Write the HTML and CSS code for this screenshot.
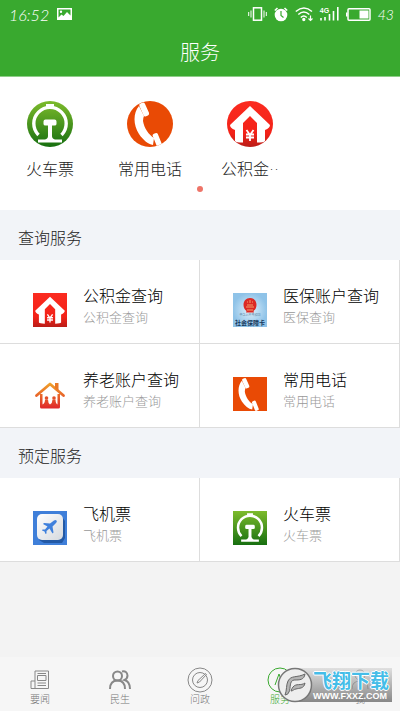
FILE: index.html
```html
<!DOCTYPE html>
<html lang="zh-CN">
<head>
<meta charset="utf-8">
<meta name="viewport" content="width=device-width, initial-scale=1">
<title>服务</title>
<link rel="stylesheet" href="styles.css">
</head>
<body>
<svg class="defs" aria-hidden="true">
  <defs>
    <linearGradient id="green" x1="0" y1="0" x2="0" y2="1"><stop offset="0" stop-color="#7dbb2c"/><stop offset="1" stop-color="#176f10"/></linearGradient>
    <linearGradient id="red" x1="0" y1="0" x2="0" y2="1"><stop offset="0" stop-color="#fb2b20"/><stop offset=".7" stop-color="#f32218"/><stop offset="1" stop-color="#b91d18"/></linearGradient>
    <linearGradient id="sunset" gradientUnits="userSpaceOnUse" x1="0" y1="6" x2="0" y2="31"><stop offset="0" stop-color="#f0a32a"/><stop offset="1" stop-color="#e0282a"/></linearGradient>
    <radialGradient id="sky"><stop offset="0" stop-color="#e2f2fc"/><stop offset="1" stop-color="#8fc3e8"/></radialGradient>
    <linearGradient id="tile" x1="0" y1="0" x2="1" y2="1"><stop offset="0" stop-color="#fff"/><stop offset="1" stop-color="#d5d9de"/></linearGradient>
    <clipPath id="round"><circle cx="23" cy="23" r="23"/></clipPath>
    <symbol id="train" viewBox="0 0 46 46">
      <rect width="46" height="46" fill="url(#green)"/>
      <path d="M11.500 34A16.200 16.200 0 1 1 34.500 34" fill="none" stroke="#fff" stroke-width="3.400"/>
      <path d="M19 7V3h8v4z" fill="#fff"/>
      <path d="M18.500 18.500h9q2 0 2 2v2.500q0 1.500-2 1.500h-2.500v10.500q0 2.500 3 3.500h7v3H11v-3h7q3-1 3-3.500V24.500h-2.500q-2 0-2-1.500v-2.500q0-2 2-2z" fill="#fff"/>
    </symbol>
    <symbol id="phone" viewBox="0 0 46 46">
      <rect width="46" height="46" fill="#e94a05"/>
      <path d="M12 5C6 12 6 24 12 33c4 6 9 10 14 11l1-7c-5-3-10-10-11-17q0-3 1-5z" fill="#fff"/>
      <rect x="14" y="1.500" width="6" height="14" rx="2" transform="rotate(-24 17 8)" fill="#fff"/>
      <rect x="27.500" y="32" width="5.500" height="14" rx="2" transform="rotate(-22 30 39)" fill="#fff"/>
    </symbol>
    <symbol id="fund" viewBox="0 0 46 46">
      <rect width="46" height="46" fill="url(#red)"/>
      <path d="M23 5 3 24q0 3 5 5v11q1 1.500 8 1.500V22l7-7 7 7v19.500q7 0 8-1.500V29q5-2 5-5z" fill="#fff"/>
      <path d="m19.500 29 3.500 5 3.500-5M19 33.500h8M19 36.500h8M23 33v7" fill="none" stroke="#fff" stroke-width="1.800"/>
    </symbol>
    <symbol id="card" viewBox="0 0 34 34">
      <rect width="34" height="34" fill="url(#sky)"/>
      <path d="M17 5c4 0 6.500 3 6.500 7 0 3-1.500 5-3 6l.5 1.500h-8l.5-1.500c-1.500-1-3-3-3-6 0-4 2.500-7 6.500-7z" fill="#dc2925"/>
      <path d="M13 14h8M14 12h6M17 7v3M14 9h1M19 9h1M14 17h6" stroke="#f3a06a"/>
    </symbol>
    <symbol id="pension" viewBox="0 0 34 34">
      <path d="M3.500 18.500 17 7l13.500 11.500" fill="none" stroke="url(#sunset)" stroke-width="2.800" stroke-linejoin="round" stroke-linecap="round"/>
      <path d="M22 6h3.500v8L22 11z" fill="#e97826"/>
      <path d="M7 17h2.500v10.500q2.500-1 2.500-5h3q0 3.500 2 5 2.500-1.500 2.500-5h3q0 4 2 5V17H27v13q0 1.500-1.500 1.500h-17Q7 31.500 7 30z" fill="url(#sunset)"/>
      <circle cx="13.500" cy="21" r="1.800" fill="#e35029"/><circle cx="21" cy="21" r="1.800" fill="#e35029"/>
    </symbol>
    <symbol id="plane" viewBox="0 0 34 34">
      <rect width="34" height="34" fill="#3f7fd9"/>
      <path d="m29 6 3 4v17l-3 5H11l-5-3z" fill="#2359a5"/>
      <rect x="4" y="3" width="26" height="26" rx="5" fill="url(#tile)"/>
      <path d="M23.500 9.500q1 1-.5 2.500l-3.500 3.500 1 6-1 1-3-5-3 2.500v2.500l-1 .5-1-2.500-2.500-1 .5-1h2.500l2.500-3-4.500-2.500 1-1 6 .5 4-3q1.500-1 2.500 0z" fill="#3f80dc"/>
    </symbol>
  </defs>
</svg>

<header class="top">
  <div class="status">
    <span class="time">16:52</span>
    <svg width="15" height="12" viewBox="0 0 15 12"><path fill="#fff" fill-rule="evenodd" d="M0 0h15v12H0zM1.500 1.500v8l3-3 2 1.500 3.500-4 3.500 3.500v-6zM4 2.500a1.200 1.200 0 1 1 0 2.400 1.200 1.200 0 0 1 0-2.400z"/></svg>
    <div class="indicators">
      <svg width="19" height="14" viewBox="0 0 19 14" fill="none" stroke="#fff"><rect x="5.500" y=".8" width="8" height="12.400" stroke-width="1.500"/><path d="M3 3.500v7M.7 5v4M16 3.500v7M18.300 5v4"/></svg>
      <svg width="14" height="15" viewBox="0 0 14 15"><circle cx="7" cy="8" r="6.300" fill="#fff"/><path d="M.8 3.500 3.500 1M10.500 1l2.700 2.500" stroke="#fff" stroke-width="1.600"/><path d="M7 4v4.500l2.500 2" fill="none" stroke="#39a92f" stroke-width="1.200"/></svg>
      <svg width="18" height="15" viewBox="0 0 18 15" fill="none" stroke="#fff" stroke-width="1.500"><path d="M.8 4.500Q9-2.500 17 4.500M3.300 7.500q5.500-5 11 0M5.800 10.500q3-3 6 0"/><circle cx="8.800" cy="12.500" r=".9" fill="#fff"/><path d="M15.500 8.500v5M13.500 11.500l2 2 2-2" stroke-width="1.200"/></svg>
      <span class="signal"><svg width="19" height="14" viewBox="0 0 19 14" stroke="#fff" stroke-width="1.600"><path d="M1 11v2.500M5 10v3.500M9.500 7v6.500M13.500 4v9.500M17.800 0v13.500"/></svg><small>4G</small></span>
      <svg width="25" height="13" viewBox="0 0 25 13"><rect x="2" y=".8" width="22" height="11.400" rx="1" fill="none" stroke="#fff" stroke-width="1.500"/><path d="M0 4.500h1.500v4H0zM13.500 2.500h9v8h-9z" fill="#fff"/></svg>
      <span class="level">43</span>
    </div>
  </div>
  <h1>服务</h1>
</header>

<main>
  <section class="featured">
    <div class="shortcuts">
      <a href="#train"><svg viewBox="0 0 46 46"><g clip-path="url(#round)"><use href="#train"/></g></svg><span>火车票</span></a>
      <a href="#phone"><svg viewBox="0 0 46 46"><g clip-path="url(#round)"><use href="#phone"/></g></svg><span>常用电话</span></a>
      <a href="#fund"><svg viewBox="0 0 46 46"><g clip-path="url(#round)"><use href="#fund"/></g></svg><span>公积金<span class="more">··</span></span></a>
    </div>
    <span class="dot"></span>
  </section>

  <section>
    <h2>查询服务</h2>
    <div class="services">
      <a href="#fund"><svg><use href="#fund"/></svg><span><b>公积金查询</b><i>公积金查询</i></span></a>
      <a href="#medical"><span class="card-icon"><svg><use href="#card"/></svg><small class="nation">中华人民共和国</small><small class="social">社会保障卡</small></span><span><b>医保账户查询</b><i>医保查询</i></span></a>
      <a href="#pension"><svg><use href="#pension"/></svg><span><b>养老账户查询</b><i>养老账户查询</i></span></a>
      <a href="#phone"><svg><use href="#phone"/></svg><span><b>常用电话</b><i>常用电话</i></span></a>
    </div>
  </section>

  <section>
    <h2>预定服务</h2>
    <div class="services">
      <a href="#plane"><svg><use href="#plane"/></svg><span><b>飞机票</b><i>飞机票</i></span></a>
      <a href="#train"><svg><use href="#train"/></svg><span><b>火车票</b><i>火车票</i></span></a>
    </div>
  </section>
</main>

<nav class="tabs">
  <a href="#news"><svg viewBox="0 0 26 26"><path d="M8 4h13.500v17.500H4V14h4zM8 14v7.500M10.500 8.500h8.500v5h-8.500zM10.500 6.500H19M10.500 16H19M10.500 18.500H19"/></svg>要闻</a>
  <a href="#life"><svg viewBox="0 0 26 26" class="bold"><circle cx="10.500" cy="9" r="4.500"/><path d="M3 22q0-8.500 7.500-8.500T18 22M15 4.500q5-1 5.500 4 0 3-3 4.500 5.500 1.500 5.500 9"/></svg>民生</a>
  <a href="#politics"><svg viewBox="0 0 26 26"><circle cx="13" cy="13" r="12"/><circle cx="13" cy="13" r="7.500"/><path d="m10 16 1-2.500 7.500-7 1 1-7 7.500z"/></svg>问政</a>
  <a href="#service" class="active"><svg viewBox="0 0 26 26"><circle cx="13" cy="13" r="12"/><path d="m8 18 4-11 3 8 4-4"/></svg>服务</a>
  <a href="#me"><svg viewBox="0 0 26 26"><circle cx="13" cy="8" r="5"/><path d="M5 22q0-8 8-8t8 8"/></svg>我</a>
</nav>

<div class="watermark">
  <svg viewBox="0 0 36 36"><circle cx="18" cy="18" r="16.500" fill="#eee" stroke="#777" stroke-width="1.500"/><path d="M8 28c2-5 1-10 3-14 3-6 9-3 17-7-1 6-5 6-11 6-5 1-3 8-5 12q-1 3-4 3zM16 20c3-4 8-1 12-4-1 6-6 5-9 6-2 0-3 2-5 2q1-3 2-4z" fill="#b5b5b5" stroke="#666"/></svg>
  <div><strong>飞翔下载</strong><small>WWW.FXXZ.COM</small></div>
</div>
</body>
</html>
```
FILE: styles.css
```css
* { box-sizing: border-box; }

body {
  margin: 0;
  min-height: 100vh;
  display: flex;
  flex-direction: column;
  position: relative;
  background: #f3f3f3;
  color: #222;
  font-family: "Noto Sans CJK SC", sans-serif;
  font-weight: 300;
  font-size: 16px;
}

a { color: inherit; text-decoration: none; }
svg { display: block; flex: none; }
.defs { position: absolute; width: 0; height: 0; }

.top { background: #39a92f; color: #fff; height: 77px; border-bottom: 1px solid #8fce89; }
.status {
  display: flex;
  align-items: center;
  gap: 8px;
  height: 28px;
  padding: 0 6px 0 9px;
  font-family: Lato, sans-serif;
  font-style: italic;
  font-size: 16px;
}
.indicators { margin-left: auto; display: flex; align-items: center; gap: 7px; }
.signal { position: relative; }
.signal small { position: absolute; left: 0; top: 0; font: bold 7px/7px "Liberation Sans", sans-serif; }
.level { font-size: 14px; }
h1 { margin: 0; text-align: center; font-size: 20px; font-weight: 300; line-height: 48px; }

.featured { height: 133px; padding-top: 24px; background: #fff; }
.shortcuts { display: grid; grid-template-columns: repeat(4, 1fr); }
.shortcuts a { display: flex; flex-direction: column; align-items: center; gap: 8px; line-height: 26px; }
.shortcuts svg { width: 46px; height: 46px; }
.more { font-family: "DejaVu Sans", sans-serif; line-height: 1; }
.dot { display: block; width: 6px; height: 6px; margin: 5px auto 0; border-radius: 50%; background: #ee7468; }

h2 { margin: 0; padding-left: 18px; background: #f2f4f8; font-size: 16px; font-weight: 300; line-height: 54px; height: 50px; }
.services { display: grid; grid-template-columns: 1fr 1fr; background: #fff; }
.services a {
  display: flex;
  align-items: flex-end;
  gap: 16px;
  height: 84px;
  padding: 0 0 16px 33px;
  border-right: 1px solid #ddd;
  border-bottom: 1px solid #ddd;
  white-space: nowrap;
}
.services svg { width: 34px; height: 34px; }
.services b, .services i { display: block; font-style: normal; }
.services b { color: #000; font-weight: 300; line-height: 24px; }
.services i { color: #999; font-size: 13px; line-height: 20px; }

.card-icon { position: relative; }
.card-icon small { position: absolute; left: 0; width: 34px; text-align: center; color: #345a80; }
.card-icon .nation { top: 20px; font-size: 3px; line-height: 5px; }
.card-icon .social { top: 26px; color: #17395c; font-size: 6px; font-weight: 700; line-height: 7px; }

.tabs {
  display: grid;
  grid-template-columns: repeat(5, 1fr);
  height: 54px;
  margin-top: auto;
  padding-top: 10px;
  background: #f6f6f6;
  color: #777;
}
.tabs a { display: flex; flex-direction: column; align-items: center; font-size: 10px; line-height: 12px; }
.tabs svg { width: 26px; height: 26px; fill: none; stroke: #888; }
.tabs .bold { stroke-width: 2; }
.tabs .active { color: #39a92f; }
.tabs .active svg { stroke: #39a92f; }

.watermark { position: absolute; right: 8px; bottom: 8px; display: flex; align-items: center; }
.watermark svg { width: 36px; height: 36px; z-index: 1; }
.watermark div {
  width: 97px;
  height: 34px;
  margin-left: -18px;
  padding-left: 18px;
  background: linear-gradient(#cccccc88, #777777dd);
}
.watermark strong {
  display: block;
  color: #45bde8;
  font-size: 19px;
  font-weight: 700;
  line-height: 24px;
  text-shadow: 1px 0 #fff, -1px 0 #fff, 0 1px #fff, 0 -1px #fff;
}
.watermark small { display: block; color: #fff; font: bold 9px/9px "Liberation Sans", sans-serif; }
```
